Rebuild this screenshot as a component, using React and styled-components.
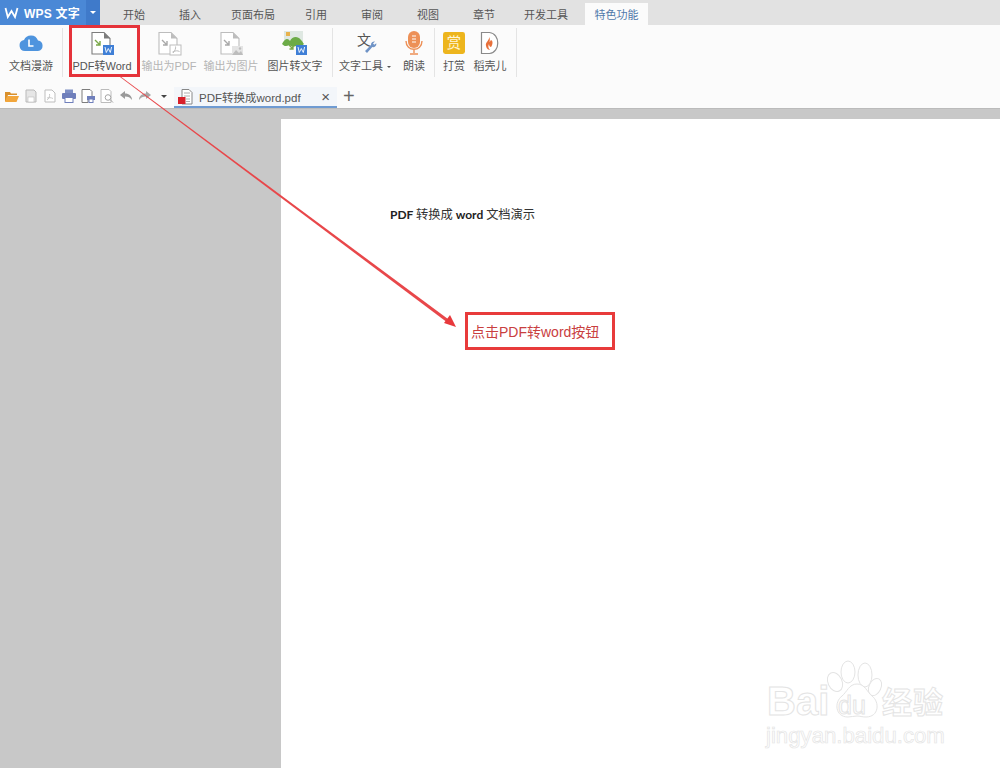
import React from "react";
import styled, { createGlobalStyle } from "styled-components";

const Global = createGlobalStyle`
  html, body { margin: 0; padding: 0; background: #c8c8c8; }
  body { font-family: "Liberation Sans", "Noto Sans CJK SC", sans-serif; }
`;
const Shell = styled.div`
  position: relative; width: 1000px; height: 768px; overflow: hidden;
  display: flex; flex-direction: column;
`;
const TabBar = styled.div`
  display: flex; height: 25px; flex: none; background: #e2e2e2; align-items: stretch;
`;
const Logo = styled.div`
  width: 86px; background: #4a88d6; color: #fff; display: flex; align-items: center;
  padding-left: 4px; gap: 5px; font-size: 12px; font-weight: 700; box-sizing: border-box; letter-spacing: .2px; white-space: nowrap;
`;
const LogoDrop = styled.div`
  width: 14px; background: #3f7aca; display: flex; align-items: center; justify-content: center;
  &::after { content: ""; border: 3px solid transparent; border-top-color: #fff; border-bottom: 0; }
`;
const TabSpacer = styled.div`width: 6px;`;
const Tab = styled.div`
  width: ${p => p.$w}px; margin-left: ${p => p.$ml || 0}px; flex: none; display: flex; align-items: center; justify-content: center;
  font-size: 11px; box-sizing: border-box;
  color: ${p => (p.$active ? "#4f78aa" : "#555")};
  background: ${p => (p.$active ? "#fbfbfb" : "transparent")};
  margin-top: ${p => (p.$active ? "3px" : "0")};
  padding-top: ${p => (p.$active ? "0" : "3px")};
`;
const Ribbon = styled.div`
  height: 57px; flex: none; background: #fbfbfb; display: flex; align-items: stretch;
`;
const RibbonItem = styled.div`
  width: ${p => p.$w}px; flex: none; display: flex; flex-direction: column; align-items: center;
  padding-top: 5px; box-sizing: border-box; white-space: nowrap;
  font-size: 11px; line-height: 14px; color: ${p => (p.$muted ? "#b5b5b5" : "#555")};
`;
const IconSlot = styled.div`
  height: 26px; margin-bottom: 3px; display: flex; align-items: center; justify-content: center;
`;
const Caret = styled.span`
  display: inline-block; margin-left: 4px; vertical-align: middle;
  border: 2.5px solid transparent; border-top-color: #555; border-bottom: 0;
`;
const Separator = styled.div`
  width: 1px; flex: none; background: #e4e4e4; margin: 3px ${p => p.$mr || 0}px 5px ${p => p.$ml || 0}px;
`;
const QuickBar = styled.div`
  height: 26px; flex: none; background: #fbfbfb; display: flex; align-items: center;
  box-sizing: content-box; padding: 0 0 0 4px; border-bottom: 1px solid #bbb;
`;
const QuickIcons = styled.div`display: flex; align-items: center; gap: 3px; margin-top: 2px;`;
const QuickDrop = styled.div`
  margin: 2px 0 0 8px; width: 0; border: 3.500px solid transparent; border-top-color: #444; border-bottom: 0;
`;
const DocTab = styled.div`
  margin-left: 7px; width: 163px; height: 21px; align-self: flex-end; box-sizing: border-box; background: #f3f6fa;
  border-bottom: 2px solid #6f9bd2; display: flex; align-items: center; padding: 0 7px 0 3px;
  font-size: 11.5px; color: #555; gap: 4px;
`;
const DocName = styled.span`flex: 1; white-space: nowrap;`;
const CloseMark = styled.span`font-size: 15px; color: #555; line-height: 1;`;
const PlusMark = styled.span`margin: 2px 0 0 6px; font-size: 20px; line-height: 1; color: #666; font-weight: 300;`;
const Workspace = styled.div`
  flex: 1; background: #c8c8c8; padding: 10px 0 0 281px; display: flex;
`;
const Page = styled.div`
  flex: 1; background: #fff; padding: 88px 0 0 109px; box-sizing: border-box;
`;
const DocTitle = styled.div`
  font-family: Lato, "Noto Sans CJK SC", sans-serif;
  font-size: 12px; line-height: 16px; color: #222; font-weight: 700;
  & > span { font-weight: 400; font-size: 12.250px; font-family: "Liberation Sans", "Noto Sans CJK SC", sans-serif; color: #333; }
`;
const Callout = styled.div`
  position: absolute; left: 465px; top: 312px; width: 150px; height: 38px; box-sizing: border-box;
  border: 3px solid #e83b3b; color: #c9403f; font-size: 14px; display: flex; align-items: center; padding-left: 3px; white-space: nowrap;
`;
const Highlight = styled.div`
  position: absolute; left: 69px; top: 25px; width: 71px; height: 52px; box-sizing: border-box;
  border: 3px solid #e5333a;
`;
const ArrowLayer = styled.svg`position: absolute; left: 0; top: 0; pointer-events: none;`;
const Watermark = styled.div`
  position: absolute; left: 764px; top: 658px; width: 190px; height: 90px; color: #fff;
  -webkit-text-stroke: 1px #e4e4e4; font-family: "Liberation Sans", "Noto Sans CJK SC", sans-serif;
`;
const WmBai = styled.span`position: absolute; left: 3px; top: 23px; font-size: 40px; line-height: 40px; font-weight: 700;`;
const WmDu = styled.span`position: absolute; left: 74px; top: 35px; font-size: 25px; line-height: 24px;`;
const WmCn = styled.span`position: absolute; left: 118px; top: 30px; font-size: 30px; line-height: 30px; font-weight: 700; white-space: nowrap; letter-spacing: 1px;`;
const WmUrl = styled.span`position: absolute; left: 2px; top: 66px; font-size: 22.200px; line-height: 24px; white-space: nowrap; -webkit-text-stroke-width: .7px;`;
const WmPaw = styled.svg`position: absolute; left: 0; top: 0;`;

const DocBase = ({ children, stroke = "#7c7c7c" }) => (
  <svg width="28" height="26" viewBox="0 0 28 26">
    <path d="M4 2.500h12l6 6V24H4z" fill="#fff" stroke={stroke} strokeWidth="1.100" />
    <path d="M16 2.500l6 6h-6z" fill={stroke} />
    {children}
  </svg>
);
const GreenArrow = ({ c = "#7aa848" }) => <path d="M7 10l5 5m0-4v4H8" fill="none" stroke={c} strokeWidth="1.400" />;
const WBadge = () => (
  <g>
    <rect x="15" y="15" width="11" height="10" fill="#3f7fd6" />
    <path d="M17 17l1.300 5.500 2-4 2 4L23.600 17" fill="none" stroke="#fff" strokeWidth=".9" />
  </g>
);
const CloudIcon = () => (
  <svg width="26" height="22" viewBox="0 0 26 22">
    <path d="M7 19a5.500 5.500 0 0 1-1-10.900A7.500 7.500 0 0 1 20 8.500 5.300 5.300 0 0 1 20 19z" fill="#4e94de" />
    <path d="M11 7.500v6.500h4.500" fill="none" stroke="#fff" strokeWidth="1.600" />
  </svg>
);
const PdfWordIcon = () => <DocBase><GreenArrow /><WBadge /></DocBase>;
const ToPdfIcon = () => (
  <DocBase stroke="#bdbdbd"><GreenArrow c="#a9a9a9" />
    <rect x="15" y="15" width="11" height="10" fill="#fff" stroke="#bdbdbd" />
    <path d="M18 23c2-2 3-5 2.500-6.500M17.500 22c3-1.500 5-1.500 7-.5" fill="none" stroke="#bdbdbd" />
  </DocBase>
);
const ToImgIcon = () => (
  <DocBase stroke="#bdbdbd"><GreenArrow c="#a9a9a9" />
    <rect x="15" y="16" width="11" height="9" fill="#e4e4e4" />
    <path d="M15 25l4-5 3 3 2-2 2 4z" fill="#bdbdbd" />
    <circle cx="23" cy="18.500" r="1.200" fill="#bdbdbd" />
  </DocBase>
);
const ImgWordIcon = () => (
  <svg width="28" height="26" viewBox="0 0 28 26">
    <rect x="3" y="1" width="19" height="15" fill="#dfe8e2" />
    <rect x="5" y="2" width="4" height="4" fill="#e8b24d" />
    <path d="M1 14c3-6 6-6 8-3 2-4 7-6 11-1 2 2 2 3 3 4-3 3-6 3-8 2l-3 1-4-2c-3 2-5 1-7-1z" fill="#6cab47" />
    <path d="M8 15l4 4m0-3.500V19H8.500" fill="none" stroke="#7aa848" strokeWidth="1.300" />
    <WBadge />
  </svg>
);
const TextToolIcon = () => (
  <svg width="26" height="26" viewBox="0 0 26 26">
    <text x="5" y="14.500" fontSize="14" fontFamily="'Noto Sans CJK SC', sans-serif" fill="#555">文</text>
    <path d="M13 21l6-6a3.200 3.200 0 0 1 4-3.500l-2 2 1.300 1.300 2-1.500a3.200 3.200 0 0 1-4 3.800L15 23z" fill="#6f93c6" />
  </svg>
);
const MicIcon = () => (
  <svg width="20" height="26" viewBox="0 0 20 26">
    <rect x="4" y="1" width="12" height="17" rx="6" fill="#ed9057" />
    <path d="M8 6h4M8 9h4M8 12h4" stroke="#fff" strokeWidth="1" />
    <path d="M2 11c0 11 16 11 16 0M10 19v4M6 24h8" fill="none" stroke="#ed9057" strokeWidth="1.400" />
  </svg>
);
const RewardIcon = () => (
  <svg width="22" height="22" viewBox="0 0 23 23">
    <rect width="23" height="23" rx="2.500" fill="#edb51d" />
    <text x="11.500" y="17" textAnchor="middle" fontSize="15" fontFamily="'Noto Sans CJK SC', sans-serif" fill="#fff6d6">赏</text>
  </svg>
);
const DaokeIcon = () => (
  <svg width="20" height="24" viewBox="0 0 20 24">
    <path d="M1.500 1.500h8c11 1 11 20 0 21h-8z" fill="#fff" stroke="#8a8a8a" strokeWidth="1.200" />
    <path d="M9 6c1 3-4 5-3 9 .5 3 3 4 4 4-2-2-2-4-1-6 0 2 1 3 2 3 2-3 2-6 0-7-1 1-1 2-1.500 2 .5-2 .5-4-.5-5z" fill="#e8703a" />
  </svg>
);

const Q = ({ children }) => <svg width="16" height="16" viewBox="0 0 16 16">{children}</svg>;
const QuickSet = () => (
  <QuickIcons>
    <Q><path d="M1 4h5l1 1.500h6V7H4l-2 6H1z" fill="#d9902c" /><path d="M3 8h12l-2.500 6H1z" fill="#f2a63c" /></Q>
    <Q><path d="M3 2h8l2 2v10H3z" fill="#e6e6e6" stroke="#b9b9b9" /><rect x="5" y="9" width="6" height="5" fill="#fff" stroke="#bbb" strokeWidth=".6" /></Q>
    <Q><path d="M3 2h7l3 3v9H3z" fill="#fff" stroke="#bdbdbd" /><path d="M5 12c2-1 3-4 2.500-6M5 10c2-.5 4-.5 6 .5" fill="none" stroke="#bdbdbd" strokeWidth=".8" /></Q>
    <Q><rect x="4" y="1.500" width="8" height="4" fill="#7e8fc4" /><rect x="1" y="5" width="14" height="6" rx="1" fill="#6f7fbb" /><rect x="4" y="9.500" width="8" height="5" fill="#fff" stroke="#6f7fbb" /></Q>
    <Q><path d="M2 1.500h8l2 2v5H8v6H2z" fill="#fff" stroke="#7d7d7d" /><rect x="7" y="8" width="8" height="4" fill="#6f7fbb" /><rect x="9" y="11" width="4" height="3.500" fill="#fff" stroke="#6f7fbb" /></Q>
    <Q><path d="M2 1.500h8l2 2v11H2z" fill="#fff" stroke="#bcbcbc" /><circle cx="9" cy="9.500" r="2.800" fill="#fff" stroke="#a5a5a5" /><path d="M11 11.500l3 3" stroke="#a5a5a5" /></Q>
    <Q><path d="M2 7l5-4v2.500c4 0 7 2.500 7 6.500-1.500-2.500-4-3.500-7-3.500V11z" fill="#9a9a9a" /></Q>
    <Q><path d="M14 7L9 3v2.500c-4 0-7 2.500-7 6.500 1.500-2.500 4-3.500 7-3.500V11z" fill="#a8a8a8" /></Q>
  </QuickIcons>
);
const PdfFileIcon = () => (
  <svg width="18" height="18" viewBox="0 0 18 18">
    <path d="M5 1.500h7l3 3V16H5z" fill="#fff" stroke="#888" />
    <path d="M7 5h6M7 8h6M9 11h4M9 13.500h4" stroke="#999" strokeWidth=".8" />
    <rect x="1" y="9" width="7.500" height="7" fill="#d8202a" />
  </svg>
);

const tabs = [
  ["开始", 56], ["插入", 56], ["页面布局", 70], ["引用", 56], ["审阅", 56], ["视图", 56], ["章节", 56], ["开发工具", 68],
];

export default function App() {
  return (
    <Shell>
      <Global />
      <TabBar>
        <Logo>
          <svg width="15" height="12" viewBox="0 0 15 12"><path d="M1.500 1l2.300 9 3.700-6 3.500 6 2.500-9" fill="none" stroke="#fff" strokeWidth="1.800" /></svg>
          WPS 文字
        </Logo>
        <LogoDrop />
        <TabSpacer />
        {tabs.map(([t, w]) => <Tab key={t} $w={w}>{t}</Tab>)}
        <Tab $w={63} $ml={5} $active>特色功能</Tab>
      </TabBar>
      <Ribbon>
        <RibbonItem $w={62}><IconSlot><CloudIcon /></IconSlot>文档漫游</RibbonItem>
        <Separator $mr={3} />
        <RibbonItem $w={72}><IconSlot><PdfWordIcon /></IconSlot>PDF转Word</RibbonItem>
        <RibbonItem $w={62} $muted><IconSlot><ToPdfIcon /></IconSlot>输出为PDF</RibbonItem>
        <RibbonItem $w={62} $muted><IconSlot><ToImgIcon /></IconSlot>输出为图片</RibbonItem>
        <RibbonItem $w={66}><IconSlot><ImgWordIcon /></IconSlot>图片转文字</RibbonItem>
        <Separator $ml={4} />
        <RibbonItem $w={64}><IconSlot><TextToolIcon /></IconSlot><span>文字工具<Caret /></span></RibbonItem>
        <RibbonItem $w={34}><IconSlot><MicIcon /></IconSlot>朗读</RibbonItem>
        <Separator $ml={3} />
        <RibbonItem $w={38}><IconSlot><RewardIcon /></IconSlot>打赏</RibbonItem>
        <RibbonItem $w={34}><IconSlot><DaokeIcon /></IconSlot>稻壳儿</RibbonItem>
        <Separator $ml={9} />
      </Ribbon>
      <QuickBar>
        <QuickSet />
        <QuickDrop />
        <DocTab>
          <PdfFileIcon />
          <DocName>PDF转换成word.pdf</DocName>
          <CloseMark>×</CloseMark>
        </DocTab>
        <PlusMark>+</PlusMark>
      </QuickBar>
      <Workspace>
        <Page>
          <DocTitle>PDF <span>转换成</span> word <span>文档演示</span></DocTitle>
        </Page>
      </Workspace>

      <Highlight />
      <ArrowLayer width="1000" height="768" viewBox="0 0 1000 768">
        <polygon points="120,77 120.600,76.500 450,320.500 448,323" fill="#e8474a" />
        <polygon points="456,327 444,323 450,315" fill="#e8393c" />
      </ArrowLayer>
      <Callout>点击PDF转word按钮</Callout>
      <Watermark>
        <WmPaw width="190" height="90" viewBox="0 0 190 90" fill="#fff" stroke="#e4e4e4" strokeWidth="1">
          <ellipse cx="71" cy="24" rx="7" ry="10" transform="rotate(-25 71 24)" />
          <ellipse cx="84" cy="14" rx="7" ry="11" />
          <ellipse cx="101" cy="17" rx="7" ry="12" />
          <ellipse cx="111" cy="29" rx="6" ry="9" transform="rotate(25 111 29)" />
          <path d="M93 26c8 0 10 8 15 12 8 6 7 21-6 21-4 0-6-1-9-1s-6 1-9 1c-13 0-14-15-6-21 5-4 7-12 15-12z" />
        </WmPaw>
        <WmBai>Bai</WmBai>
        <WmDu>du</WmDu>
        <WmCn>经验</WmCn>
        <WmUrl>jingyan.baidu.com</WmUrl>
      </Watermark>
    </Shell>
  );
}
